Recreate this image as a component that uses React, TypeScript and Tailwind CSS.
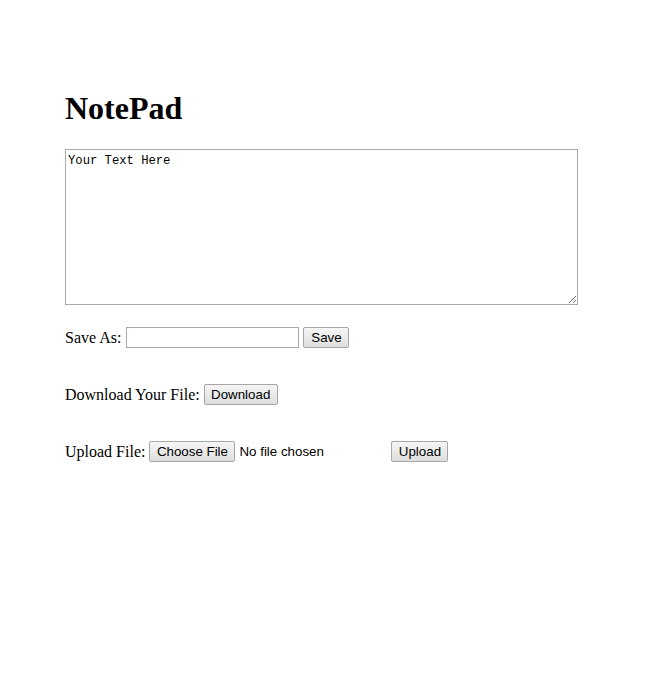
import React from "react"

function OldButton({ label, width }: { label: string; width: string }) {
  return (
    <button
      type="button"
      className={`${width} h-[21px] shrink-0 rounded-[2px] border border-[#a6a6a6] bg-gradient-to-b from-[#f6f6f6] to-[#dedede] px-[6px] font-['Liberation_Sans',Arial,sans-serif] text-[13.33px] leading-none text-black`}
    >
      {label}
    </button>
  )
}

export default function App() {
  return (
    <div className="min-h-[696px] bg-white pl-[65px] pt-[90px] font-['Liberation_Serif','Times_New_Roman',serif] text-[16px] text-black">
      <h1 className="text-[32px] font-bold leading-[37px]">NotePad</h1>

      <textarea
        defaultValue="Your Text Here"
        className="mt-[22px] block h-[156px] w-[513px] resize border border-[#a9a9a9] px-[2px] pb-[2px] pt-[4px] font-['Liberation_Mono','Courier_New',monospace] text-[12.2px] leading-[15px] text-black outline-none"
      />

      {/* Save row */}
      <div className="mt-[22px] flex h-[21px] items-center gap-[4px]">
        <span>Save As:</span>
        <input
          type="text"
          className="ml-px h-[21px] w-[173px] border border-[#a9a9a9] px-[2px] font-['Liberation_Sans',Arial,sans-serif] text-[13.33px] outline-none"
        />
        <OldButton label="Save" width="w-[46px]" />
      </div>

      {/* Download row */}
      <div className="mt-[36px] flex h-[21px] items-center gap-[4px]">
        <span>Download Your File:</span>
        <OldButton label="Download" width="w-[74px]" />
      </div>

      {/* Upload row */}
      <div className="mt-[36px] flex h-[21px] items-center gap-[4px]">
        <span>Upload File:</span>
        <div className="flex w-[238px] items-center gap-[4px]">
          <OldButton label="Choose File" width="w-[86px]" />
          <span className="font-['Liberation_Sans',Arial,sans-serif] text-[13.33px]">No file chosen</span>
        </div>
        <OldButton label="Upload" width="w-[57px]" />
      </div>
    </div>
  )
}
